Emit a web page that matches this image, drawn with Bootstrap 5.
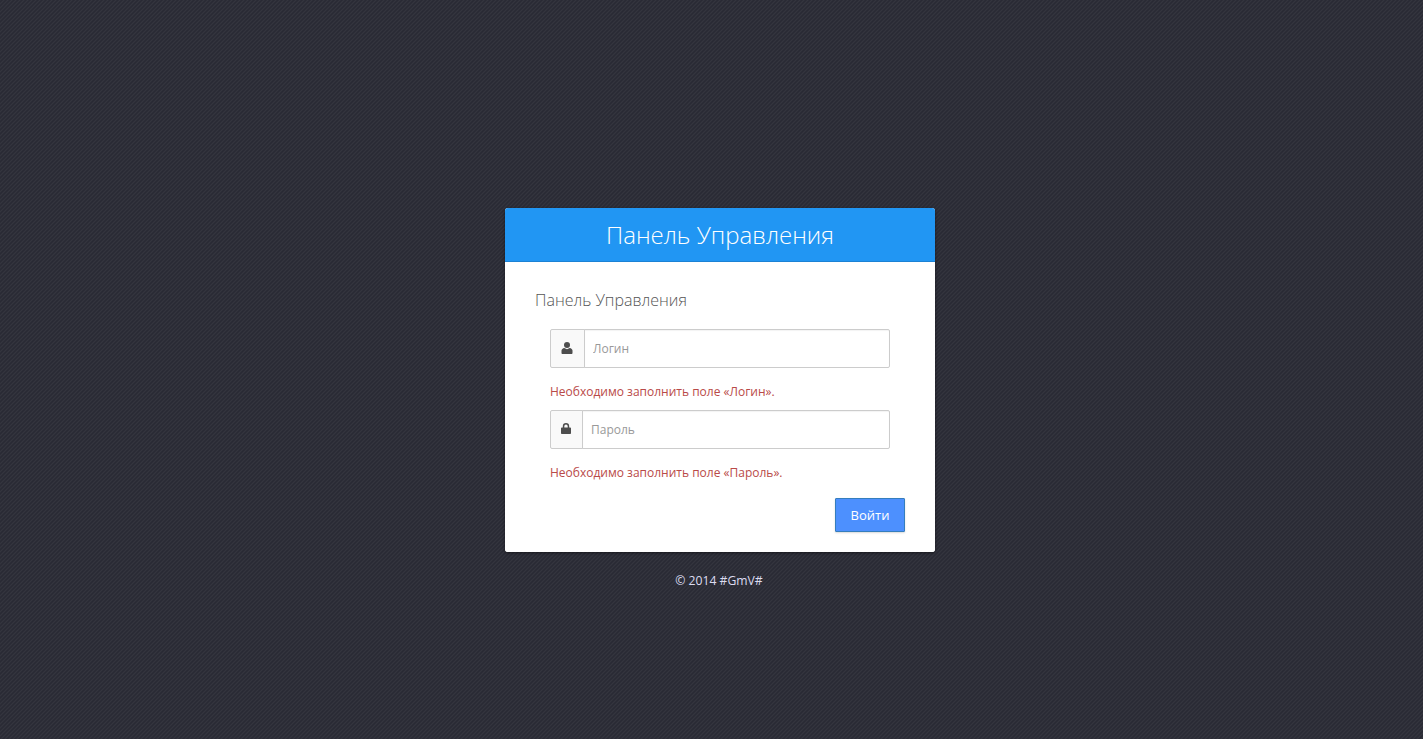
<!DOCTYPE html>
<html lang="ru">
<head>
    <meta charset="UTF-8">
    <meta name="viewport" content="width=device-width, initial-scale=1.0">
    <title>Панель Управления</title>
    <link rel="stylesheet" href="https://cdn.jsdelivr.net/npm/bootstrap@5.3.0/dist/css/bootstrap.min.css">
    <style>
        body {
            font-family: "Open Sans", "Liberation Sans", sans-serif;
            font-size: 13px;
            padding-left: 17px;
            background-color: #2d2e38;
            background-image: url("data:image/svg+xml,%3Csvg xmlns='http://www.w3.org/2000/svg' width='4' height='4' shape-rendering='crispEdges'%3E%3Cpath fill='%23fff' fill-opacity='.03' d='M3 0h1v1H3zM2 1h1v1H2zM1 2h1v1H1zM0 3h1v1H0z'/%3E%3Cpath fill='%23000' fill-opacity='.08' d='M1 0h1v1H1zM0 1h1v1H0zM3 2h1v1H3zM2 3h1v1H2z'/%3E%3C/svg%3E");
            min-height: 739px;
        }
        .login-wrap { width: 430px; padding-top: 208px; }
        .login-box { border: 0; border-radius: 3px; overflow: hidden; box-shadow: 0 1px 3px rgba(0,0,0,.5); }
        .login-head {
            height: 54px;
            background: #2196f3;
            border-bottom: 1px solid #1c82d4;
            color: #fff;
            font-size: 24px;
            font-weight: 300;
            line-height: 53px;
            text-align: center;
        }
        .login-body { padding: 26px 30px 20px; height: 290px; }
        .login-title { font-size: 16px; font-weight: 300; line-height: 24px; color: #555; margin: 0 0 17px; }
        .login-fields { padding: 0 15px; width: 370px; }
        .login-fields .input-group { height: 39px; }
        .login-fields .input-group-text {
            background: #f9f9f9;
            border: 1px solid #ccc;
            border-radius: 2px 0 0 2px;
            color: #4d4d4d;
            padding: 0 1px 1px 0;
            justify-content: center;
        }
        .addon-user { width: 35px; }
        .addon-lock { width: 33px; }
        .login-fields .input-group-text.addon-lock { padding-bottom: 3px; }
        .login-fields .form-control {
            border: 1px solid #ccc;
            border-radius: 0 2px 2px 0;
            font-size: 12px;
            padding: 0 8px;
            box-shadow: inset 0 1px 1px rgba(0,0,0,.05);
        }
        .login-fields .form-control::placeholder { color: #999; }
        .field-error { color: #b94a48; font-size: 12px; line-height: 18px; margin: 15px 0 9px; }
        .btn-enter {
            width: 70px;
            height: 34px;
            padding: 1px 0 0;
            background: #4d90fe;
            border: 1px solid #357ebd;
            border-radius: 1px;
            color: #fff;
            font-size: 13px;
            box-shadow: 0 1px 2px rgba(0,0,0,.15);
        }
        .login-foot { color: #dcdcf0; font-size: 12.2px; line-height: 18px; margin-top: 20px; padding-right: 2px; }
    </style>
</head>
<body>
    <div class="login-wrap mx-auto">
        <div class="card login-box">
            <div class="login-head">Панель Управления</div>
            <div class="login-body bg-white">
                <h1 class="login-title">Панель Управления</h1>
                <form>
                    <div class="login-fields">
                        <div class="input-group">
                            <span class="input-group-text addon-user">
                                <svg width="12" height="12" viewBox="0 0 12 12" fill="currentColor"><circle cx="6" cy="3" r="3"/><path d="M0.500 11V8.600C0.500 7.300 1.800 6.300 3.300 6L6 7.300 8.700 6C10.200 6.300 11.500 7.300 11.500 8.600V11C11.500 11.600 11 12 10.500 12H1.500C1 12 .5 11.600 .5 11Z"/></svg>
                            </span>
                            <input type="text" class="form-control" placeholder="Логин">
                        </div>
                        <div class="field-error">Необходимо заполнить поле «Логин».</div>
                        <div class="input-group">
                            <span class="input-group-text addon-lock">
                                <svg width="10" height="11" viewBox="0 0 10 11" fill="currentColor"><path d="M1.800 4.500V3.200a3.200 3.200 0 0 1 6.400 0V4.500H9.200c.5 0 .8.300.8.800v4.900c0 .5-.3.800-.8.800H.8c-.5 0-.8-.3-.8-.8V5.300c0-.5.300-.8.800-.8ZM3.300 4.500h3.400V3.200a1.700 1.700 0 0 0-3.400 0Z"/></svg>
                            </span>
                            <input type="password" class="form-control" placeholder="Пароль">
                        </div>
                        <div class="field-error">Необходимо заполнить поле «Пароль».</div>
                    </div>
                    <div class="d-flex justify-content-end mt-3">
                        <button type="button" class="btn btn-enter">Войти</button>
                    </div>
                </form>
            </div>
        </div>
        <div class="login-foot text-center">© 2014 #GmV#</div>
    </div>
    <script src="https://cdn.jsdelivr.net/npm/bootstrap@5.3.0/dist/js/bootstrap.bundle.min.js"></script>
</body>
</html>
